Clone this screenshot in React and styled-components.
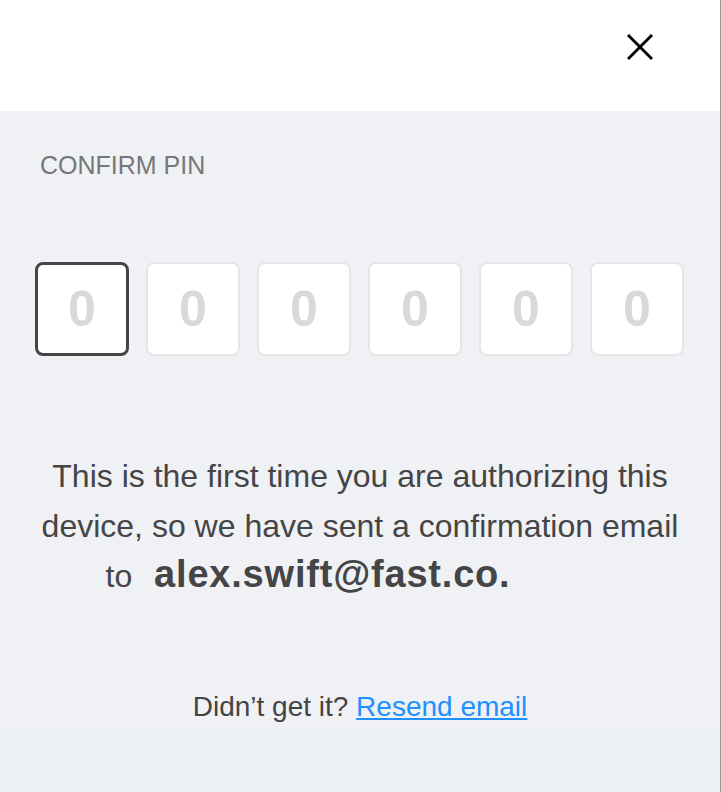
import React from 'react';
import styled, { createGlobalStyle } from 'styled-components';

const GlobalStyle = createGlobalStyle`
  html, body {
    margin: 0;
    padding: 0;
    background: #f0f1f5;
  }
  body {
    font-family: "Liberation Sans", Arial, sans-serif;
  }
`;

const PIN = ['0', '0', '0', '0', '0', '0'];

function App() {
  return (
    <Screen>
      <GlobalStyle />
      <Header>
        <CloseButton aria-label="Close">
          <svg width="26" height="26" viewBox="0 0 26 26">
            <line x1="1" y1="1" x2="25" y2="25" stroke="#000" strokeWidth="2.8" />
            <line x1="25" y1="1" x2="1" y2="25" stroke="#000" strokeWidth="2.8" />
          </svg>
        </CloseButton>
      </Header>

      <Body>
        <Title>CONFIRM PIN</Title>

        <PinRow>
          {PIN.map((d, i) => (
            <PinBox key={i} active={i === 0}>
              <Digit>{d}</Digit>
            </PinBox>
          ))}
        </PinRow>

        <Message>
          This is the first time you are authorizing this device, so we have sent a
          confirmation email to <Email>alex.swift@fast.co.</Email>
        </Message>

        <Resend>
          Didn’t get it? <ResendLink href="#">Resend email</ResendLink>
        </Resend>
      </Body>

      <Bottom />
    </Screen>
  );
}

const Screen = styled.div`
  display: flex;
  flex-direction: column;
  min-height: 100vh;
  width: 720px;
  border-right: 1px solid #9a9a9a;
`;

const Header = styled.div`
  height: 111px;
  background: #ffffff;
  display: flex;
  justify-content: flex-end;
  align-items: flex-start;
  padding: 34px 67px 0 0;
  box-sizing: border-box;
`;

const CloseButton = styled.button`
  border: none;
  background: transparent;
  padding: 0;
  margin: 0;
  width: 26px;
  height: 26px;
  cursor: pointer;
  display: block;

  svg {
    display: block;
  }
`;

const Body = styled.div`
  background: #f0f1f5;
  padding: 42px 0 4px;
  display: flex;
  flex-direction: column;
`;

const Title = styled.div`
  font-size: 25px;
  line-height: 25px;
  color: #777777;
  padding-left: 40px;
`;

const PinRow = styled.div`
  display: flex;
  gap: 17px;
  padding-left: 35px;
  margin-top: 84px;
`;

const PinBox = styled.div`
  width: 94px;
  height: 94px;
  box-sizing: border-box;
  background: #ffffff;
  border: ${p => (p.active ? '3px solid #454545' : '2px solid #e6e6e6')};
  border-radius: 8px;
  display: flex;
  align-items: center;
  justify-content: center;
`;

const Digit = styled.span`
  font-size: 50px;
  font-weight: bold;
  color: #d9d9d9;
  line-height: 1;
`;

const Message = styled.p`
  margin: 95px 0 0;
  padding: 0 36px;
  font-size: 32px;
  line-height: 50px;
  color: #454545;
  text-align: center;
`;

const Email = styled.span`
  font-size: 38px;
  font-weight: bold;
  letter-spacing: 0.8px;
  line-height: 40px;
  margin: 0 104px 0 13px;
`;

const Resend = styled.div`
  margin-top: 86px;
  font-size: 28px;
  line-height: 40px;
  color: #444444;
  text-align: center;
`;

const ResendLink = styled.a`
  color: #1e90ff;
  text-decoration: underline;
`;

const Bottom = styled.div`
  flex: 1;
  background: #edf1f5;
`;

export default App;
